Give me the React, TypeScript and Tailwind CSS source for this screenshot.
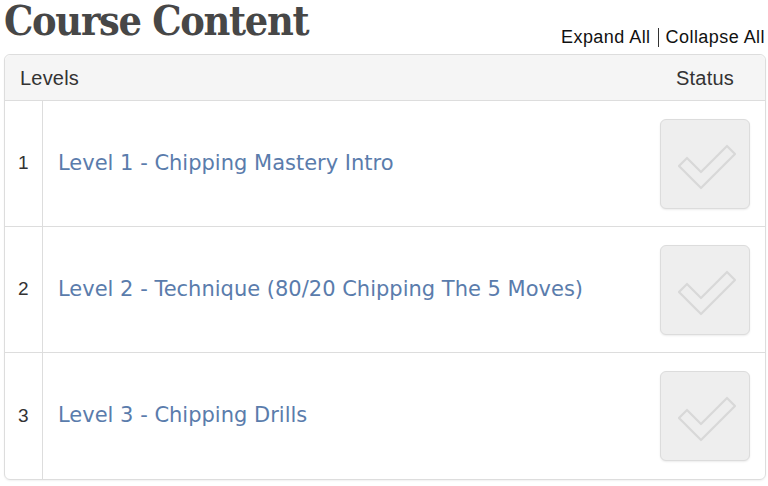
import React from "react";

interface Level {
    num: number;
    title: string;
}

const levels: Level[] = [
    {num: 1, title: "Level 1 - Chipping Mastery Intro"},
    {num: 2, title: "Level 2 - Technique (80/20 Chipping The 5 Moves)"},
    {num: 3, title: "Level 3 - Chipping Drills"},
];

function StatusBox() {
    return (
        <div className="w-[90px] h-[90px] rounded-[6px] bg-[#eeeeee] border border-[#dcdcdc] shadow-[0_1px_2px_rgba(0,0,0,0.08)]">
            <svg width="88" height="88" viewBox="1 1 88 88">
                <polygon
                    points="19,47 27,39 41,53 67,27 75,35 41,69"
                    fill="none"
                    stroke="#d8d8d8"
                    strokeWidth="2.2"
                    strokeLinejoin="round"
                />
            </svg>
        </div>
    );
}

function App() {
    return (
        <div className="w-[768px] h-[486px] bg-white overflow-hidden relative">
            <div className="flex justify-between items-start pl-[4px] pr-[3px] h-[50px]">
                <h1 className="text-[41px] leading-none font-bold text-[#474747] mt-[1px] font-['DejaVu_Serif_Condensed','DejaVu_Serif',serif] tracking-[-1.3px]">Course Content</h1>
                <div className="self-end mb-[1px] text-[18px] leading-[24px] text-[#111] font-['Liberation_Sans',sans-serif] flex items-center tracking-[0.45px]">
                    <span>Expand All</span>
                    <span className="w-px h-[19px] bg-[#333] mx-[7px]"></span>
                    <span>Collapse All</span>
                </div>
            </div>
            <div className="ml-[4px] mr-[2px] mt-[4px] border border-[#dddddd] rounded-[6px] font-['Liberation_Sans',sans-serif] shadow-[0_1px_2px_rgba(0,0,0,0.06)]">
                <div className="flex items-center h-[46px] bg-[#f5f5f5] border-b border-[#dddddd] rounded-t-[6px] text-[20px] text-[#333]">
                    <div className="pl-[15px] flex-1 tracking-[0.2px]">Levels</div>
                    <div className="w-[120px] text-center tracking-[0.2px]">Status</div>
                </div>
                {levels.map((level, i) => (
                    <div key={level.num} className={"flex h-[126px] " + (i < levels.length - 1 ? "border-b border-[#dddddd]" : "")}>
                        <div className="w-[38px] border-r border-[#dddddd] flex items-center pl-[13px] text-[19px] text-[#333]">{level.num}</div>
                        <div className="flex-1 flex items-center pl-[15px] text-[21px] text-[#5a7cac] font-['DejaVu_Sans',sans-serif]">{level.title}</div>
                        <div className="w-[120px] flex items-center justify-center">
                            <StatusBox />
                        </div>
                    </div>
                ))}
            </div>
        </div>
    );
}

export default App;
